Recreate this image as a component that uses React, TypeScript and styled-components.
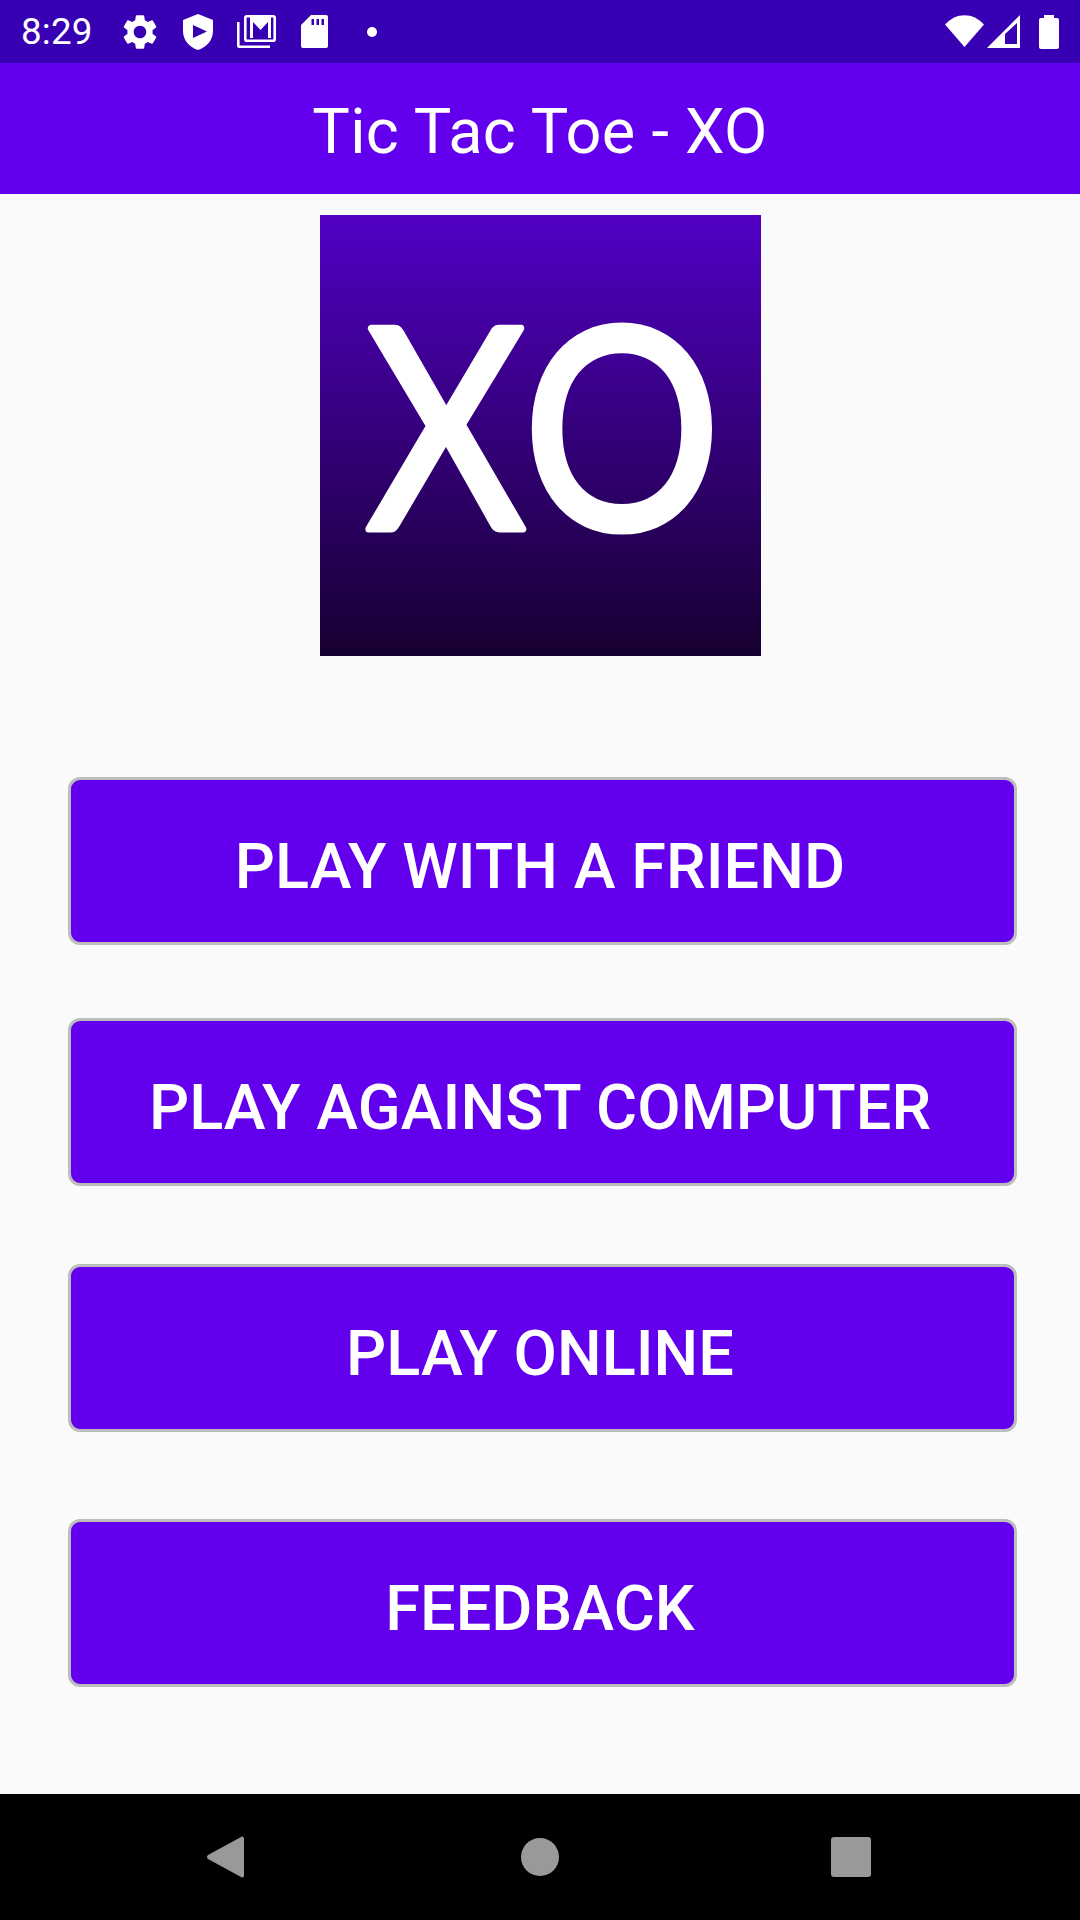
import styled, { createGlobalStyle } from 'styled-components';

const GlobalStyle = createGlobalStyle`
  html, body { margin: 0; padding: 0; background: #fafafa; }
  body { font-family: Roboto, "Liberation Sans", sans-serif; }
`;

const Screen = styled.div` display: flex; flex-direction: column; width: 1080px; height: 1920px; overflow: hidden; background: #fafafa; `;

const StatusBar = styled.div` display: flex; align-items: center; height: 63px; padding: 0 21px; box-sizing: border-box; background: #3700b3; color: #fff; `;
const Clock = styled.div` width: 98px; font-size: 36.75px; line-height: 63px; letter-spacing: 0.2px; `;
const StatusIcons = styled.div` display: flex; align-items: center; gap: 16px; `;
const SystemIcons = styled.div` display: flex; align-items: center; gap: 3px; margin-left: auto; `;
const Slot = styled.div` display: flex; align-items: center; justify-content: center; width: 42px; height: 63px; `;
const BatteryIcon = styled.svg` margin-left: 16px; `;

const AppBar = styled.header` display: flex; align-items: center; justify-content: center; height: 131px; background: #6200ee; `;
const AppTitle = styled.h1` margin: 5px 0 0; color: #fff; font-size: 63px; font-weight: 400; letter-spacing: 0.3px; `;

const Content = styled.main` flex: 1; display: flex; flex-direction: column; align-items: center; `;
const Logo = styled.div`
  width: 441px; height: 441px; margin-top: 21px;
  background: linear-gradient(#5200c4, #160030);
`;
const LogoMark = styled.svg` display: block; `;
const LogoText = styled.text`
  fill: #fff; stroke: #fff; stroke-width: 7px; stroke-linejoin: round;
  font-family: Lato, sans-serif; font-size: 280px;
`;
const MenuButton = styled.button<{ $top: number }>`
  display: block; width: 949px; height: 168px; margin: ${(p) => p.$top}px 0 0 5px; padding: 11px 5px 0 0; box-sizing: border-box;
  border: 3px solid #bdbdbd; border-radius: 12px; background: #6200ee; color: #fff;
  font-family: Roboto, sans-serif; font-size: 63px; font-weight: 500; letter-spacing: 0.05px; text-transform: uppercase;
`;

const NavBar = styled.nav` display: grid; grid-template-columns: 314px 310px auto; align-items: center; height: 126px; padding-left: 207px; background: #000; `;

const GEAR = 'M19.14 12.94c.04-.3.06-.61.06-.94 0-.32-.02-.64-.07-.94l2.03-1.58c.18-.14.23-.41.12-.61l-1.92-3.32c-.12-.22-.37-.29-.59-.22l-2.39.96c-.5-.38-1.03-.7-1.62-.94l-.36-2.54c-.04-.24-.24-.41-.48-.41h-3.84c-.24 0-.43.17-.47.41l-.36 2.54c-.59.24-1.13.57-1.62.94l-2.39-.96c-.22-.08-.47 0-.59.22L2.74 8.87c-.12.21-.08.47.12.61l2.03 1.58c-.05.3-.09.63-.09.94s.02.64.07.94l-2.03 1.58c-.18.14-.23.41-.12.61l1.92 3.32c.12.22.37.29.59.22l2.39-.96c.5.38 1.03.7 1.62.94l.36 2.54c.05.24.24.41.48.41h3.84c.24 0 .44-.17.47-.41l.36-2.54c.59-.24 1.13-.56 1.62-.94l2.39.96c.22.08.47 0 .59-.22l1.92-3.32c.12-.22.07-.47-.12-.61l-2.01-1.58zM12 15.6c-1.98 0-3.6-1.62-3.6-3.6s1.62-3.6 3.6-3.6 3.6 1.62 3.6 3.6-1.62 3.6-3.6 3.6z';

const MENU = [
  { label: 'Play with a friend', top: 121 },
  { label: 'Play against computer', top: 73 },
  { label: 'Play online', top: 78 },
  { label: 'Feedback', top: 87 },
];

function StatusGlyphs() {
  return (
    <StatusIcons>
      <Slot>
        <svg width="42" height="42" viewBox="0 0 24 24" fill="#fff"><path d={GEAR} /></svg>
      </Slot>
      <Slot>
        <svg width="30" height="36" viewBox="0 0 30 36" fill="#fff">
          <path fillRule="evenodd" d="M15 0L30 6V17C30 26 24 33 15 36C6 33 0 26 0 17V6ZM10 11V24L24 17.5Z" />
        </svg>
      </Slot>
      <Slot>
        <svg width="39" height="33" viewBox="0 0 39 33" fill="none" stroke="#fff" strokeWidth="2.6">
          <rect x="8.3" y="1.3" width="29.4" height="24.4" rx="1.5" />
          <path d="M1.3 7V30.5Q1.3 31.7 2.5 31.7H33" />
          <path fill="#fff" stroke="none" d="M13 1H34V23H31V7L23.5 15 16 7V23H13Z" />
        </svg>
      </Slot>
      <Slot>
        <svg width="27" height="33" viewBox="0 0 27 33" fill="#fff">
          <path fillRule="evenodd" d="M10 0H25Q27 0 27 2V31Q27 33 25 33H2Q0 33 0 31V10ZM10.5 4V10H13V4ZM15.5 4V10H18V4ZM20.5 4V10H23V4Z" />
        </svg>
      </Slot>
      <Slot>
        <svg width="10" height="10" viewBox="0 0 10 10" fill="#fff"><circle cx="5" cy="5" r="5" /></svg>
      </Slot>
    </StatusIcons>
  );
}

function SystemGlyphs() {
  return (
    <SystemIcons>
      <svg width="39" height="33" viewBox="0 0 39 33" fill="#fff">
        <path d="M0 9.5C11 -3 28 -3 39 9.5L19.5 32Z" />
      </svg>
      <svg width="33" height="33" viewBox="0 0 33 33" fill="#fff">
        <path fillRule="evenodd" d="M0 33L33 0V33ZM18 29H30V8L18 19Z" />
      </svg>
      <BatteryIcon width="20" height="34" viewBox="0 0 20 34" fill="#fff">
        <path d="M5 0H15V3H18Q20 3 20 5V32Q20 34 18 34H2Q0 34 0 32V5Q0 3 2 3H5Z" />
      </BatteryIcon>
    </SystemIcons>
  );
}

export default function App() {
  return (
    <Screen>
      <GlobalStyle />
      <StatusBar>
        <Clock>8:29</Clock>
        <StatusGlyphs />
        <SystemGlyphs />
      </StatusBar>
      <AppBar>
        <AppTitle>Tic Tac Toe - XO</AppTitle>
      </AppBar>
      <Content>
        <Logo>
          <LogoMark width="441" height="441" viewBox="0 0 441 441">
            <LogoText transform="translate(46 314) scale(0.88 1)">X<tspan dx="-3">O</tspan></LogoText>
          </LogoMark>
        </Logo>
        {MENU.map((item) => (
          <MenuButton key={item.label} $top={item.top}>{item.label}</MenuButton>
        ))}
      </Content>
      <NavBar>
        <svg width="37" height="42" viewBox="0 0 37 42" fill="#999">
          <path d="M35 0.5Q37 0 37 3V39Q37 42 35 41.5L1 23Q-1 21 1 19Z" />
        </svg>
        <svg width="38" height="38" viewBox="0 0 38 38" fill="#999"><circle cx="19" cy="19" r="19" /></svg>
        <svg width="40" height="40" viewBox="0 0 40 40" fill="#999"><rect width="40" height="40" rx="3" /></svg>
      </NavBar>
    </Screen>
  );
}
